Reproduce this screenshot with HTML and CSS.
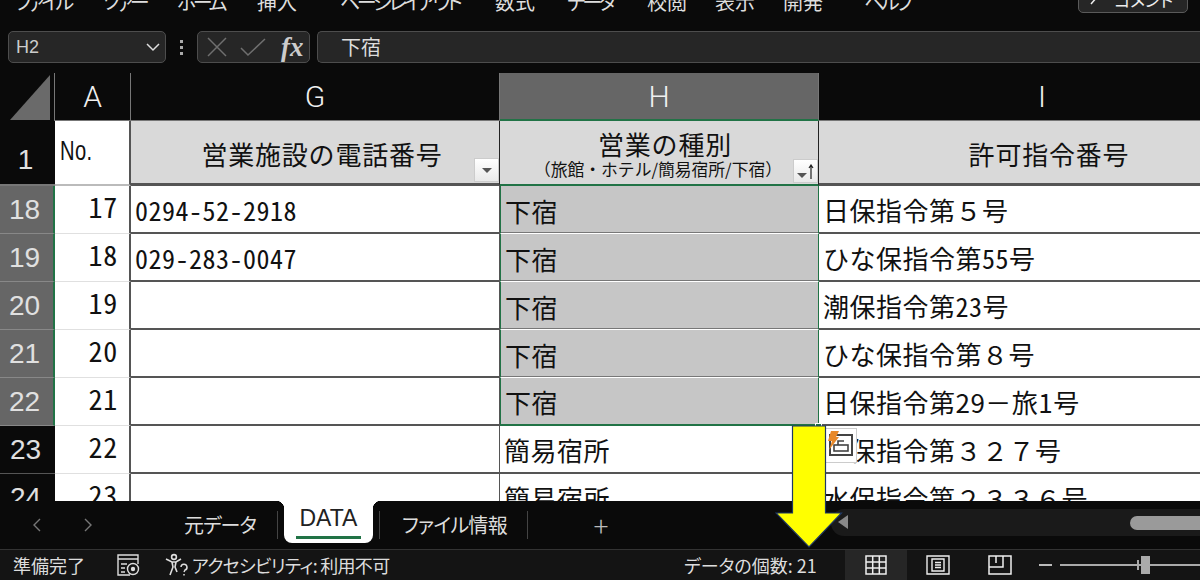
FILE: index.html
```html
<!DOCTYPE html>
<html lang="ja">
<head>
    <meta charset="UTF-8">
    <meta name="viewport" content="width=device-width, initial-scale=1.0">
    <title>Excel DATA</title>
    <link rel="stylesheet" href="styles.css">
</head>
<body>
    <div class="menu-bar">
        <span class="menu-item kana">ファイル</span>
        <span class="menu-item kana">ツァー</span>
        <span class="menu-item kana">ホーム</span>
        <span class="menu-item">挿入</span>
        <span class="menu-item kana">ページレイアウト</span>
        <span class="menu-item">数式</span>
        <span class="menu-item kana">データ</span>
        <span class="menu-item">校閲</span>
        <span class="menu-item">表示</span>
        <span class="menu-item">開発</span>
        <span class="menu-item kana">ヘルプ</span>
        <span class="comment-btn">
            <svg width="12" height="12" viewBox="0 0 12 12"><path d="M2 10l6-7" fill="none" stroke="#eee" stroke-width="1.5"/></svg>
            コメント
        </span>
    </div>

    <div class="formula-bar">
        <div class="name-box">
            <span>H2</span>
            <svg width="16" height="10" viewBox="0 0 16 10"><path d="M2 2l6 6 6-6" fill="none" stroke="#ddd" stroke-width="1.5"/></svg>
        </div>
        <div class="grip"><i></i><i></i><i></i></div>
        <div class="fx-box">
            <svg width="20" height="20" viewBox="0 0 20 20"><path d="M1 1l18 18M19 1L1 19" fill="none" stroke="#6f6f6f" stroke-width="1.5"/></svg>
            <svg width="26" height="20" viewBox="0 0 26 20"><path d="M1 11l7 7L25 2" fill="none" stroke="#6f6f6f" stroke-width="1.5"/></svg>
            <span class="fx">fx</span>
        </div>
        <div class="formula-input">下宿</div>
    </div>

    <div class="sheet">
        <div class="corner"><div class="corner-tri"></div></div>
        <div class="col-head">A</div>
        <div class="col-head">G</div>
        <div class="col-head active">H</div>
        <div class="col-head">I</div>

        <div class="row-head first">1</div>
        <div class="cell no-head"><span>No.</span></div>
        <div class="cell title">営業施設の電話番号<span class="filter"><b class="tri"></b></span></div>
        <div class="cell title title-h">
            <span class="main">営業の種別</span>
            <span class="sub">（旅館・ホテル/簡易宿所/下宿）</span>
            <span class="filter"><b class="tri low"></b><svg width="6" height="15" viewBox="0 0 6 15"><path d="M3 15V1M1 4l2-3 2 3" fill="none" stroke="#222" stroke-width="1.2"/></svg></span>
        </div>
        <div class="cell title">許可指令番号</div>

        <div class="row-head sel">18</div>
        <div class="cell num">17</div>
        <div class="cell">0294-52-2918</div>
        <div class="cell sel-cell">下宿</div>
        <div class="cell plain">日保指令第５号</div>

        <div class="row-head sel">19</div>
        <div class="cell num">18</div>
        <div class="cell">029-283-0047</div>
        <div class="cell sel-cell">下宿</div>
        <div class="cell">ひな保指令第55号</div>

        <div class="row-head sel">20</div>
        <div class="cell num">19</div>
        <div class="cell"></div>
        <div class="cell sel-cell">下宿</div>
        <div class="cell">潮保指令第23号</div>

        <div class="row-head sel">21</div>
        <div class="cell num">20</div>
        <div class="cell"></div>
        <div class="cell sel-cell">下宿</div>
        <div class="cell plain">ひな保指令第８号</div>

        <div class="row-head sel">22</div>
        <div class="cell num">21</div>
        <div class="cell"></div>
        <div class="cell sel-cell last-sel">下宿</div>
        <div class="cell plain">日保指令第29－旅1号</div>

        <div class="row-head">23</div>
        <div class="cell num">22</div>
        <div class="cell"></div>
        <div class="cell">簡易宿所</div>
        <div class="cell plain">日保指令第３２７号</div>

        <div class="row-head">24</div>
        <div class="cell num">23</div>
        <div class="cell"></div>
        <div class="cell">簡易宿所</div>
        <div class="cell plain">水保指令第２３３６号</div>

        <div class="fill-handle"></div>
        <div class="smart-tag">
            <svg class="tag-icon" width="28" height="30" viewBox="0 0 28 30">
                <rect x="3" y="5" width="22" height="20" fill="#fff" stroke="#444" stroke-width="2"/>
                <rect x="7" y="15" width="14" height="6" fill="#fff" stroke="#444" stroke-width="1.6"/>
                <path d="M11 15v-4h6" fill="none" stroke="#444" stroke-width="1.6"/>
                <path d="M4 1h8L9 7h3L2 20l3-9H1z" fill="#e8892b"/>
            </svg>
        </div>
    </div>

    <div class="tab-bar">
        <div class="tab-nav">
            <svg width="10" height="16" viewBox="0 0 10 16"><path d="M8 2L2 8l6 6" fill="none" stroke="#777" stroke-width="1.4"/></svg>
            <svg width="10" height="16" viewBox="0 0 10 16"><path d="M2 2l6 6-6 6" fill="none" stroke="#777" stroke-width="1.4"/></svg>
        </div>
        <div class="tab source-tab">元データ</div>
        <div class="tab-sep"></div>
        <div class="tab active">
            <i class="flare left"></i>
            DATA
            <i class="flare right"></i>
        </div>
        <div class="tab-sep"></div>
        <div class="tab file-tab">ファイル情報</div>
        <div class="tab-sep"></div>
        <div class="tab-add">+</div>
        <div class="h-scroll">
            <b class="scroll-arrow"></b>
            <b class="scroll-thumb"></b>
        </div>
    </div>

    <div class="status-bar">
        <span class="status-ready">準備完了</span>
        <svg class="macro-icon" width="24" height="24" viewBox="0 0 24 24">
            <path d="M14 22H2V2h20v9M2 6h20M5 11h6M5 15h4M5 19h4" fill="none" stroke="#ddd" stroke-width="1.4"/>
            <circle cx="17" cy="16" r="5.500" fill="#141414" stroke="#ddd" stroke-width="1.4"/>
            <circle cx="17" cy="16" r="2.200" fill="#ddd"/>
        </svg>
        <svg class="access-icon" width="26" height="24" viewBox="0 0 26 24">
            <circle cx="10" cy="4" r="2.400" fill="none" stroke="#ddd" stroke-width="1.6"/>
            <path d="M2 6l6 3h4l5-3M8 9l1 5-3 8M12 9l-1 5 2 5" fill="none" stroke="#ddd" stroke-width="1.6"/>
            <path d="M17 14a3 3 0 1 1 4 3l-1 2M20 21v1.500" fill="none" stroke="#ddd" stroke-width="1.5"/>
        </svg>
        <span class="status-access">アクセシビリティ: 利用不可</span>
        <span class="status-count">データの個数: 21</span>
        <div class="view-btn active">
            <svg width="22" height="20" viewBox="0 0 22 20"><path d="M1 1h20v18H1zM1 7h20M1 13h20M7.700 1v18M14.300 1v18" fill="none" stroke="#eee" stroke-width="1.5"/></svg>
        </div>
        <div class="view-btn">
            <svg width="24" height="20" viewBox="0 0 24 20"><path d="M1 1h22v18H1zM6 4h12v12H6zM9 7.500h6M9 10h6M9 12.500h6" fill="none" stroke="#eee" stroke-width="1.4"/></svg>
        </div>
        <div class="view-btn">
            <svg width="24" height="20" viewBox="0 0 24 20"><path d="M1 1h22v18H1zM1 12h14V1M8 1v7" fill="none" stroke="#eee" stroke-width="1.5"/></svg>
        </div>
        <div class="zoom-slider">
            <span class="minus"></span>
            <span class="track"><i class="mid"></i><i class="knob"></i></span>
        </div>
    </div>

    <svg class="arrow" width="68" height="124" viewBox="0 0 68 124">
        <path d="M17.500 1H50.500V88H66.500L34 122L1 88H17.500Z" fill="#ffff00" stroke="#1f3864" stroke-width="1.2"/>
    </svg>
</body>
</html>
```

FILE: styles.css
```css
* {
    box-sizing: border-box;
}
body {
    margin: 0;
    width: 1200px;
    height: 580px;
    overflow: hidden;
    position: relative;
    background: #0a0a0a;
    color: #e6e6e6;
    font-family: 'Noto Sans CJK JP', 'Liberation Sans', sans-serif;
    font-feature-settings: "palt";
}
.menu-bar {
    height: 31px;
    padding-left: 15px;
    overflow: hidden;
    display: grid;
    grid-template-columns: 87px 75px 80px 83px 155px 72px 80px 68px 68px 81px 214px 110px;
    align-items: start;
}
.menu-item {
    margin-top: -10px;
    font-size: 20px;
    line-height: 24px;
    color: #ddd;
    white-space: nowrap;
}
.menu-item.kana {
    letter-spacing: -3.400px;
}
.comment-btn {
    margin-top: -14px;
    height: 27px;
    background: #262626;
    border: 1px solid #5a5a5a;
    border-radius: 5px;
    padding-left: 10px;
    font-size: 17px;
    line-height: 24px;
    color: #eee;
    display: flex;
    align-items: center;
    gap: 13px;
    white-space: nowrap;
}
.formula-bar {
    height: 42px;
    padding: 0 0 10px 8px;
    display: flex;
    align-items: stretch;
}
.name-box {
    width: 158px;
    background: #262626;
    border: 1px solid #4d4d4d;
    border-radius: 5px;
    display: flex;
    align-items: center;
    justify-content: space-between;
    padding: 0 4px 0 7px;
    font-family: 'Liberation Sans', sans-serif;
    font-size: 18px;
    color: #ccc;
}
.grip {
    width: 31px;
    display: flex;
    flex-direction: column;
    align-items: center;
    justify-content: center;
    gap: 3px;
}
.grip i {
    width: 3px;
    height: 3px;
    background: #aaa;
}
.fx-box {
    width: 113px;
    background: #262626;
    border: 1px solid #4d4d4d;
    border-radius: 5px;
    display: flex;
    align-items: center;
    gap: 13px;
    padding-left: 9px;
    margin-right: 7px;
}
.fx {
    font-family: 'Liberation Serif', serif;
    font-style: italic;
    font-weight: bold;
    font-size: 27px;
    line-height: 28px;
    color: #ccc;
    margin-left: 2px;
}
.formula-input {
    flex: 1;
    background: #262626;
    border: 1px solid #4d4d4d;
    border-right: none;
    border-radius: 5px 0 0 5px;
    padding-left: 23px;
    font-size: 20px;
    line-height: 30px;
    color: #ddd;
    font-feature-settings: normal;
}
.sheet {
    height: 428px;
    position: relative;
    overflow: hidden;
    display: grid;
    grid-template-columns: 55px 76px 369px 319px 447px;
    grid-template-rows: 48px 65px repeat(5, 48px) 48px 48px;
}
.corner {
    padding: 2px 4px 1px 10px;
    border-right: 1px solid #777;
}
.corner-tri {
    height: 100%;
    background: #6a6a6a;
    clip-path: polygon(100% 0, 100% 100%, 0 100%);
}
.col-head {
    display: flex;
    align-items: center;
    justify-content: center;
    border-right: 1px solid #777;
    border-bottom: 1px solid #777;
    font-family: 'Roboto', sans-serif;
    font-weight: 300;
    font-size: 30px;
    color: #f0f0f0;
}
.col-head.active {
    background: #666;
    border-bottom: 2px solid #217346;
}
.col-head:last-of-type {
    border-right: none;
}
.row-head {
    background: #0a0a0a;
    display: flex;
    align-items: center;
    justify-content: center;
    border-bottom: 1px solid #555;
    padding-right: 4px;
    font-family: 'Liberation Sans', sans-serif;
    font-size: 28px;
    color: #e0e0e0;
}
.row-head.first {
    padding-top: 14px;
    border-bottom: 2px solid #777;
}
.row-head.sel {
    background: #666;
    border-bottom: 1px solid #888;
    border-right: 2px solid #217346;
}
.cell {
    background: #fff;
    color: #111;
    border-right: 1px solid #555;
    border-bottom: 2px solid #555;
    display: flex;
    align-items: center;
    padding: 2px 0 0 4px;
    font-family: 'Noto Sans CJK JP', sans-serif;
    font-feature-settings: "hwid";
    font-size: 26px;
    line-height: 40px;
    letter-spacing: 0.500px;
    white-space: nowrap;
    overflow: hidden;
    position: relative;
}
.cell.plain {
    font-feature-settings: normal;
}
.cell.num, .no-head {
    border-right: 2px solid #555;
    border-bottom: 1px solid #e0e0e0;
}
.cell.num {
    justify-content: flex-end;
    padding: 0 11px 8px 0;
    font-size: 28px;
    letter-spacing: 0.700px;
}
.no-head {
    align-items: flex-start;
    padding: 12px 0 0 5px;
    font-family: 'Liberation Sans', sans-serif;
    font-size: 28px;
    line-height: 36px;
    border-bottom: 2px solid #bbb;
}
.no-head span {
    display: inline-block;
    transform: scaleX(0.72);
    transform-origin: left;
}
.title {
    background: #d9d9d9;
    justify-content: center;
    padding: 3px 0 0 14px;
    font-feature-settings: normal;
    letter-spacing: 0.800px;
    border-right: 1px solid #222;
    border-bottom: 3px solid #555;
}
.title-h {
    flex-direction: column;
    padding: 0 0 0 12px;
    line-height: 1;
    border-bottom: 2px solid #217346;
}
.main {
    font-size: 26px;
    line-height: 32px;
}
.sub {
    font-size: 16.800px;
    line-height: 18px;
    letter-spacing: 0;
    margin-left: -14px;
}
.filter {
    position: absolute;
    right: 0;
    bottom: 1px;
    width: 25px;
    height: 24px;
    background: linear-gradient(#fff, #e9e9e9);
    border: 1px solid #ccc;
    display: flex;
    align-items: center;
    justify-content: center;
    gap: 1px;
}
.tri {
    width: 0;
    height: 0;
    border-left: 5px solid transparent;
    border-right: 5px solid transparent;
    border-top: 5px solid #555;
}
.tri.low {
    margin-top: 9px;
}
.sel-cell {
    background: #c6c6c6;
    border-right: 1px solid #217346;
    border-left: 1px solid #217346;
    border-bottom: 1px solid #fff;
    box-shadow: inset 0 -1px 0 #777;
}
.sel-cell.last-sel {
    border-bottom: 2px solid #217346;
    box-shadow: none;
}
.fill-handle {
    position: absolute;
    left: 815px;
    top: 350px;
    width: 7px;
    height: 7px;
    background: #217346;
    border: 1px solid #fff;
}
.smart-tag {
    position: absolute;
    left: 825px;
    top: 355px;
    width: 32px;
    height: 35px;
    background: #fff;
    border: 1px solid #ccc;
    padding: 1px;
}
.tag-icon {
    display: block;
}
.tab-bar {
    height: 48px;
    background: #0a0a0a;
    display: flex;
    align-items: center;
    font-size: 20px;
    color: #ddd;
}
.tab-nav {
    width: 156px;
    display: flex;
    align-items: center;
    gap: 41px;
    padding-left: 32px;
}
.tab {
    padding: 0 21px 2px 28px;
    white-space: nowrap;
}
.source-tab {
    letter-spacing: -1px;
}
.tab.active {
    align-self: flex-start;
    height: 42px;
    width: 89px;
    margin: 0 6px;
    background: #fff;
    color: #222;
    border-radius: 0 0 8px 8px;
    padding: 4px 0 0;
    text-align: center;
    font-family: 'Liberation Sans', sans-serif;
    font-size: 23px;
    position: relative;
}
.tab.active::after {
    content: "";
    position: absolute;
    left: 12px;
    right: 12px;
    bottom: 4px;
    height: 3px;
    background: #217346;
}
.flare {
    position: absolute;
    top: 0;
    width: 8px;
    height: 8px;
}
.flare.left {
    left: -8px;
    background: radial-gradient(circle at 0 100%, transparent 8px, #fff 8.500px);
}
.flare.right {
    right: -8px;
    background: radial-gradient(circle at 100% 100%, transparent 8px, #fff 8.500px);
}
.file-tab {
    padding: 0 20px 2px 22px;
    letter-spacing: -0.700px;
}
.tab-sep {
    width: 1px;
    height: 28px;
    background: #444;
}
.tab-add {
    width: 146px;
    text-align: center;
    font-size: 28px;
    line-height: 30px;
    color: #bbb;
    font-weight: 300;
}
.h-scroll {
    flex: 1;
    height: 27px;
    margin: 0 0 5px 157px;
    background: #1a1a1a;
    border-radius: 13px 0 0 13px;
    position: relative;
}
.scroll-arrow {
    position: absolute;
    left: 7px;
    top: 6px;
    border-top: 7px solid transparent;
    border-bottom: 7px solid transparent;
    border-right: 10px solid #888;
}
.scroll-thumb {
    position: absolute;
    left: 299px;
    top: 7px;
    right: 0;
    height: 14px;
    background: #9a9a9a;
    border-radius: 7px 0 0 7px;
}
.status-bar {
    height: 31px;
    background: #141414;
    border-top: 1px solid #333;
    display: flex;
    align-items: center;
    font-size: 18px;
    color: #ddd;
    padding-left: 13px;
}
.status-ready {
    width: 103px;
    white-space: nowrap;
}
.macro-icon {
    margin-right: 24px;
}
.access-icon {
    margin-right: 2px;
}
.status-access {
    width: 492px;
    letter-spacing: -0.700px;
    white-space: nowrap;
}
.status-count {
    width: 161px;
    white-space: nowrap;
}
.view-btn {
    width: 62px;
    height: 100%;
    display: flex;
    align-items: center;
    justify-content: center;
}
.view-btn.active {
    background: #262626;
}
.zoom-slider {
    flex: 1;
    display: flex;
    align-items: center;
    padding-left: 8px;
    gap: 8px;
}
.minus {
    width: 13px;
    height: 2px;
    background: #bbb;
}
.track {
    flex: 1;
    height: 2px;
    background: #aaa;
    position: relative;
}
.track .mid {
    position: absolute;
    left: 77px;
    top: -4px;
    width: 2px;
    height: 10px;
    background: #aaa;
}
.track .knob {
    position: absolute;
    left: 81px;
    top: -8px;
    width: 9px;
    height: 18px;
    background: #aaa;
}
.arrow {
    position: absolute;
    left: 775px;
    top: 425px;
}
```
